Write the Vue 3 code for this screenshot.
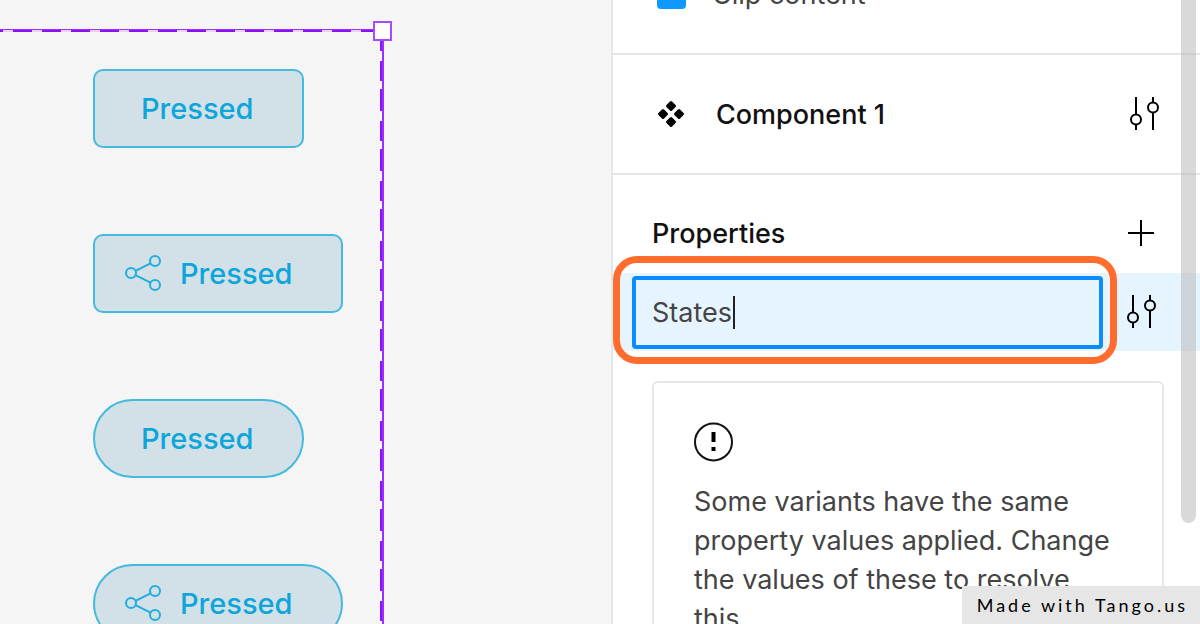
<script setup>
import { ref } from 'vue'

const variants = [
  { id: 1, pill: false, icon: false },
  { id: 2, pill: false, icon: true },
  { id: 3, pill: true, icon: false },
  { id: 4, pill: true, icon: true },
]
const clip = ref(true)
const propertyName = ref('States')
</script>

<template>
  <div class="editor">
    <main class="canvas">
      <section class="frame" aria-label="Component set">
        <button
          v-for="v in variants"
          :key="v.id"
          type="button"
          class="variant"
          :class="{ pill: v.pill, 'with-icon': v.icon }"
        >
          <svg v-if="v.icon" class="share" viewBox="0 0 38 38" aria-hidden="true">
            <circle cx="7" cy="19" r="5" />
            <circle cx="31" cy="7" r="5" />
            <circle cx="31" cy="31" r="5" />
            <path d="M11.5 16.8 26.500 9.300M11.500 21.200 26.500 28.700" />
          </svg>
          <span>Pressed</span>
        </button>
        <span class="handle"></span>
      </section>
    </main>

    <aside class="panel">
      <div class="scroller">
        <div class="row">
          <label class="clip">
            <input v-model="clip" type="checkbox" />
            <span>Clip content</span>
          </label>
        </div>

        <div class="row">
          <svg class="component-icon" viewBox="0 0 28 28" aria-hidden="true">
            <path d="M14 2.500 17.500 6 14 9.500 10.500 6ZM14 18.500 17.500 22 14 25.500 10.500 22ZM6 10.500 9.500 14 6 17.500 2.500 14ZM22 10.500 25.500 14 22 17.500 18.500 14Z" />
          </svg>
          <h2 class="component-name">Component 1</h2>
          <button type="button" class="icon-button" aria-label="Component settings">
            <svg viewBox="0 0 32 36" aria-hidden="true">
              <path d="M7 1v17M7 29v5M24 1v5M24 17v17" />
              <circle cx="7" cy="23.500" r="5" />
              <circle cx="24" cy="11.500" r="5" />
            </svg>
          </button>
        </div>

        <div class="heading">
          <h2>Properties</h2>
          <button type="button" class="icon-button" aria-label="Add property">
            <svg viewBox="0 0 32 36" aria-hidden="true">
              <path d="M16 5v26M3 18h26" />
            </svg>
          </button>
        </div>

        <div class="property">
          <div class="field">
            <input v-model="propertyName" type="text" aria-label="Property name" spellcheck="false" />
            <span class="caret"></span>
            <span class="highlight"></span>
          </div>
          <button type="button" class="icon-button" aria-label="Edit property">
            <svg viewBox="0 0 32 36" aria-hidden="true">
              <path d="M7 1v17M7 29v5M24 1v5M24 17v17" />
              <circle cx="7" cy="23.500" r="5" />
              <circle cx="24" cy="11.500" r="5" />
            </svg>
          </button>
        </div>

        <div class="notice">
          <svg viewBox="0 0 40 40" aria-hidden="true">
            <circle cx="19.500" cy="20" r="18.500" />
            <path d="M17.500 10h4v10h-4zM17.500 25h4v4h-4z" />
          </svg>
          <p>Some variants have the same property values applied. Change the values of these to resolve this.</p>
        </div>
      </div>
      <span class="scrollbar"></span>
    </aside>

    <div class="credit">Made with Tango.us</div>
  </div>
</template>

<style>
body {
  margin: 0;
}
</style>

<style scoped>
.editor {
  position: relative;
  display: grid;
  grid-template-columns: minmax(0, 1fr) 589px;
  height: 100vh;
  overflow: hidden;
  background: #f5f5f5;
  color: #111;
  font-family: Inter, "Liberation Sans", sans-serif;
  font-size: 27px;
}
.editor * {
  box-sizing: border-box;
}
button,
input {
  font: inherit;
}
h2,
p {
  margin: 0;
  font-size: inherit;
}
h2 {
  font-weight: 500;
}

.canvas {
  padding-top: 29px;
  overflow: hidden;
}
.frame {
  position: relative;
  display: flex;
  flex-direction: column;
  align-items: flex-start;
  gap: 86px;
  width: 384px;
  padding: 40px 0 40px 93px;
  background:
    linear-gradient(#9a30ff, #9a30ff) 0 0 / 100% 1px no-repeat,
    repeating-linear-gradient(90deg, #8a10ff 0 3px, #e6d2fb 3px 13px, #8a10ff 13px 29px) 0 1px / 100% 2px no-repeat,
    linear-gradient(#9a30ff, #9a30ff) 100% 0 / 2px 100% no-repeat,
    repeating-linear-gradient(#8a10ff 0 22px, #fff 22px 32px, #8a10ff 32px 52px, #fff 52px 60px) 380px 0 / 2px 100% no-repeat;
}
.handle {
  position: absolute;
  top: -8px;
  right: -8px;
  width: 19px;
  height: 20px;
  border: 2px solid #a34dff;
  background: #fff;
}
.variant {
  display: flex;
  align-items: center;
  gap: 18px;
  height: 79px;
  padding: 0 48px 1px 46px;
  border: 2px solid #46b9de;
  border-radius: 10px;
  background: #d1e1e7;
  color: #0ea5da;
  font-size: 29px;
  font-weight: 500;
}
.variant.with-icon {
  padding-left: 29px;
}
.variant.pill {
  border-radius: 40px;
}
.share {
  width: 38px;
  height: 38px;
  fill: none;
  stroke: #22addc;
  stroke-width: 2;
}

.panel {
  position: relative;
  border-left: 2px solid #e6e6e6;
  background: #fff;
  overflow: hidden;
}
.scroller {
  margin-top: -65px;
}
.row {
  display: flex;
  align-items: center;
  height: 120px;
  padding: 0 39px 0 44px;
  border-bottom: 2px solid #e6e6e6;
}
.clip {
  display: flex;
  align-items: center;
  gap: 26px;
  color: #444;
}
.clip input {
  appearance: none;
  width: 29px;
  height: 29px;
  margin: 0;
  border-radius: 4px;
  background: #0d99ff;
}
.component-icon {
  width: 28px;
  height: 28px;
  stroke: #000;
  stroke-width: 3;
  stroke-linejoin: round;
}
.component-name {
  flex: 1;
  margin-left: 31px;
}
.icon-button {
  display: flex;
  padding: 0;
  border: 0;
  background: none;
}
.icon-button svg {
  width: 32px;
  height: 36px;
  fill: none;
  stroke: #000;
  stroke-width: 2;
}
.heading {
  display: flex;
  align-items: center;
  justify-content: space-between;
  height: 98px;
  padding: 18px 43px 0 39px;
}
.property {
  display: flex;
  align-items: center;
  gap: 23px;
  height: 78px;
  padding: 0 42px 0 19px;
  background: #e5f4ff;
}
.field {
  position: relative;
  flex: 1;
}
.field input {
  display: block;
  width: 100%;
  height: 73px;
  padding: 0 16px;
  border: 4px solid #0a8bff;
  border-radius: 4px;
  outline: 0;
  background: #e5f4ff;
  color: #444;
}
.caret {
  position: absolute;
  top: 20px;
  left: 101px;
  width: 2px;
  height: 33px;
  background: #222;
}
.highlight {
  position: absolute;
  inset: -20px -14px -15px -19px;
  border: 7px solid #ff6d2e;
  border-radius: 24px;
  pointer-events: none;
}
.notice {
  margin: 30px 36px 0 39px;
  padding: 39px 40px;
  border: 2px solid #e6e6e6;
  border-radius: 6px;
  color: #444;
  line-height: 39px;
}
.notice svg {
  display: block;
  width: 40px;
  height: 40px;
  margin-bottom: 20px;
}
.notice circle {
  fill: none;
  stroke: #111;
  stroke-width: 2;
}
.notice path {
  fill: #000;
}
.scrollbar {
  position: absolute;
  top: -8px;
  right: 4px;
  width: 15px;
  height: 531px;
  border-radius: 8px;
  background: rgba(179, 179, 179, 0.5);
}
.credit {
  position: absolute;
  right: 0;
  bottom: 0;
  padding: 0 12px 0 15px;
  background: #e6e6e6;
  color: #000;
  font-family: Lato, sans-serif;
  font-size: 18px;
  line-height: 38px;
  letter-spacing: 3px;
}
</style>
